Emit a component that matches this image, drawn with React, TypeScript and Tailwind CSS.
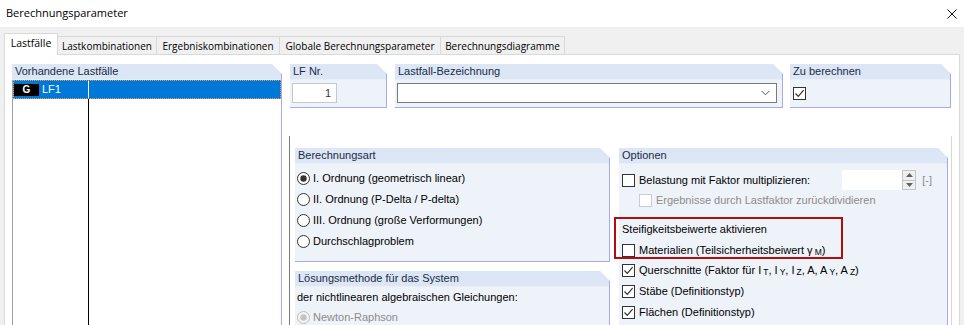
import type { ReactNode } from "react";

/* ----------------------------------------
   FONTS / SHARED STYLES
----------------------------------------- */

const SEGOE = "font-['Open_Sans',sans-serif]";
const TAHOMA = "font-['Liberation_Sans',Arial,sans-serif]";

const tabs = [
  { label: "Lastfälle", width: "w-[54px]", active: true },
  { label: "Lastkombinationen", width: "w-[99px]" },
  { label: "Ergebniskombinationen", width: "w-[123px]" },
  { label: "Globale Berechnungsparameter", width: "w-[161px]" },
  { label: "Berechnungsdiagramme", width: "w-[124px]" },
];

/* ----------------------------------------
   SMALL CONTROLS
----------------------------------------- */

const Group = ({
  title,
  className,
  children,
}: {
  title: string;
  className: string;
  children?: ReactNode;
}) => (
  <div
    className={`flex flex-col border-r border-b border-[#a9a9ee] [clip-path:polygon(0_0,calc(100%_-_10px)_0,100%_10px,100%_100%,0_100%)] ${className}`}
  >
    <div
      className={`h-4 shrink-0 bg-[#dce6f4] border-b border-[#e9eff8] pl-[3px] text-[11px] leading-[15px] text-[#1b2b47] ${TAHOMA}`}
    >
      {title}
    </div>
    {children}
  </div>
);

const Radio = ({ checked, disabled }: { checked?: boolean; disabled?: boolean }) => (
  <svg width="13" height="13" viewBox="0 0 13 13" className="shrink-0">
    <circle
      cx="6.5"
      cy="6.5"
      r="6"
      fill={disabled ? "#f4f4f4" : "#fff"}
      stroke={disabled ? "#bcbcbc" : "#333"}
    />
    {checked && <circle cx="6.5" cy="6.5" r="3.2" fill={disabled ? "#c4c4c4" : "#333"} />}
  </svg>
);

const Check = ({ checked, disabled }: { checked?: boolean; disabled?: boolean }) => (
  <span
    className={`flex w-[13px] h-[13px] shrink-0 items-center justify-center border bg-white ${
      disabled ? "border-[#cccccc]" : "border-[#333]"
    }`}
  >
    {checked && (
      <svg width="11" height="11" viewBox="0 0 11 11">
        <path d="M1.5 5.5 L4.3 8.3 L9.6 2.2" fill="none" stroke="#333" strokeWidth="1.2" />
      </svg>
    )}
  </span>
);

const Sub = ({ children }: { children: ReactNode }) => (
  <span className="ml-[2px] text-[8.5px] align-[-1px]">{children}</span>
);

/* ----------------------------------------
   APP
----------------------------------------- */

export default function App() {
  return (
    <div className={`w-[964px] h-[325px] overflow-hidden bg-[#f0f0f0] text-black ${SEGOE}`}>
      {/* title bar */}
      <div className="flex h-[27px] items-center justify-between bg-white pl-[6px] pr-[7px]">
        <span className="text-[11px]">Berechnungsparameter</span>
        <svg width="10" height="10" viewBox="0 0 10 10">
          <path d="M0.5 0.5 L9.5 9.5 M9.5 0.5 L0.5 9.5" stroke="#111" strokeWidth="1" />
        </svg>
      </div>

      {/* tabs */}
      <div className="flex h-[27px] items-end pl-1">
        {tabs.map((tab) =>
          tab.active ? (
            <div
              key={tab.label}
              className={`relative z-10 -mb-px flex h-[22px] items-center justify-center whitespace-nowrap border border-b-0 border-[#d9d9d9] bg-white pb-[2px] text-[10.5px] ${tab.width}`}
            >
              {tab.label}
            </div>
          ) : (
            <div
              key={tab.label}
              className={`flex h-[18px] items-center justify-center whitespace-nowrap border-t border-r border-[#d9d9d9] bg-[#f0f0f0] pt-px text-[10px] ${tab.width}`}
            >
              {tab.label}
            </div>
          )
        )}
      </div>

      {/* panel */}
      <div className="mx-1 flex h-[300px] gap-2 border border-[#d9d9d9] bg-white pl-[7px] pt-[9px]">
        {/* Vorhandene Lastfälle */}
        <Group title="Vorhandene Lastfälle" className="w-[270px] bg-white">
          <div className="flex flex-1 flex-col border-l border-[#a0a0a0]">
            <div className="flex h-[19px] bg-[#0078d7] outline-1 outline-dotted outline-[#e8a050] -outline-offset-1">
              <div className={`flex w-[76px] items-center border-r border-white pl-px ${TAHOMA}`}>
                <span className="flex h-[12px] w-[25px] items-center justify-center bg-black text-[10px] font-bold text-white">
                  G
                </span>
                <span className="ml-[3px] text-[11px] text-white">LF1</span>
              </div>
            </div>
            <div className="flex flex-1">
              <div className="w-[76px] border-r border-black" />
            </div>
          </div>
        </Group>

        {/* right side */}
        <div className="flex w-[661px] flex-col">
          <div className="flex h-[44px]">
            <Group title="LF Nr." className="w-[97px] bg-[#eef2f9]">
              <div className="pl-[2px] pt-[3px]">
                <div className={`flex h-[20px] w-[45px] items-center justify-end border border-[#c8c8c8] bg-white pr-[5px] text-[11px] text-[#333] ${TAHOMA}`}>
                  1
                </div>
              </div>
            </Group>
            <Group title="Lastfall-Bezeichnung" className="ml-2 w-[388px] bg-[#eef2f9]">
              <div className="pl-[2px] pt-[3px]">
                <div className="flex h-[20px] w-[380px] items-center justify-end border border-[#7a7a7a] bg-white pr-[6px]">
                  <svg width="9" height="6" viewBox="0 0 9 6">
                    <path d="M0.5 0.8 L4.5 4.8 L8.5 0.8" fill="none" stroke="#555" strokeWidth="1" />
                  </svg>
                </div>
              </div>
            </Group>
            <Group title="Zu berechnen" className="ml-[7px] w-[161px] bg-[#eef2f9]">
              <div className="pl-[3px] pt-[7px]">
                <Check checked />
              </div>
            </Group>
          </div>

          {/* scrolled area */}
          <div className={`-ml-px mt-[28px] flex w-[663px] flex-1 gap-[9px] border-l border-r border-l-[#7a7a7a] border-r-[#d6d6d6] pl-[5px] pt-[12px] text-[11px] ${TAHOMA}`}>
            <div className="flex w-[315px] flex-col">
              <Group title="Berechnungsart" className="bg-[#eef2f9]">
                <div className="flex flex-col pb-[9px] pl-[2px] pt-[4px]">
                  {[
                    { label: "I. Ordnung (geometrisch linear)", checked: true },
                    { label: "II. Ordnung (P-Delta / P-delta)" },
                    { label: "III. Ordnung (große Verformungen)" },
                    { label: "Durchschlagproblem" },
                  ].map((r) => (
                    <label key={r.label} className="flex h-[21px] items-center gap-[3px]">
                      <Radio checked={r.checked} />
                      {r.label}
                    </label>
                  ))}
                </div>
              </Group>
              <Group title="Lösungsmethode für das System" className="mt-[9px] h-[80px] bg-[#eef2f9]">
                <div className="flex flex-col pl-[2px]">
                  <div className="flex h-[20px] items-center">der nichtlinearen algebraischen Gleichungen:</div>
                  <label className="flex h-[20px] items-center gap-[3px] text-[#8c8c8c]">
                    <Radio checked disabled />
                    Newton-Raphson
                  </label>
                </div>
              </Group>
            </div>

            <div className="relative flex w-[329px] flex-col">
              <Group title="Optionen" className="h-[200px] bg-[#eef2f9]">
                <div className="flex flex-col pl-[3px] pt-[6px]">
                  <div className="flex h-[20px] items-center">
                    <Check />
                    <span className="ml-[4px] flex-1">Belastung mit Faktor multiplizieren:</span>
                    <div className="flex h-[20px] w-[74px] items-stretch bg-white">
                      <div className="flex-1" />
                      <div className="flex w-[14px] flex-col border border-[#c4c4c4] bg-[#f0f0f0]">
                        <div className="flex flex-1 items-center justify-center border-b border-[#c4c4c4]">
                          <svg width="7" height="4" viewBox="0 0 7 4">
                            <path d="M0 4 L3.5 0 L7 4 Z" fill="#606060" />
                          </svg>
                        </div>
                        <div className="flex flex-1 items-center justify-center">
                          <svg width="7" height="4" viewBox="0 0 7 4">
                            <path d="M0 0 L3.5 4 L7 0 Z" fill="#606060" />
                          </svg>
                        </div>
                      </div>
                    </div>
                    <span className="ml-[6px] mr-[15px] text-[#8c8c8c]">[-]</span>
                  </div>
                  <div className="flex h-[21px] items-center pl-[17px] text-[#8c8c8c]">
                    <Check disabled />
                    <span className="ml-[4px]">Ergebnisse durch Lastfaktor zurückdividieren</span>
                  </div>
                  <div className="mt-[8px] flex h-[21px] items-center">Steifigkeitsbeiwerte aktivieren</div>
                  <div className="flex h-[20px] items-center">
                    <Check />
                    <span className="ml-[4px]">
                      Materialien (Teilsicherheitsbeiwert γ<Sub>M</Sub>)
                    </span>
                  </div>
                  <div className="flex h-[21px] items-center">
                    <Check checked />
                    <span className="ml-[4px]">
                      Querschnitte (Faktor für I<Sub>T</Sub>, I<Sub>Y</Sub>, I<Sub>Z</Sub>, A, A<Sub>Y</Sub>, A
                      <Sub>Z</Sub>)
                    </span>
                  </div>
                  <div className="flex h-[21px] items-center">
                    <Check checked />
                    <span className="ml-[4px]">Stäbe (Definitionstyp)</span>
                  </div>
                  <div className="flex h-[21px] items-center">
                    <Check checked />
                    <span className="ml-[4px]">Flächen (Definitionstyp)</span>
                  </div>
                </div>
              </Group>

              {/* red highlight annotation */}
              <div className="pointer-events-none absolute left-[-5px] top-[69px] h-[42px] w-[229px] border-2 border-[#b40d0d]" />
            </div>
          </div>
        </div>
      </div>
    </div>
  );
}
